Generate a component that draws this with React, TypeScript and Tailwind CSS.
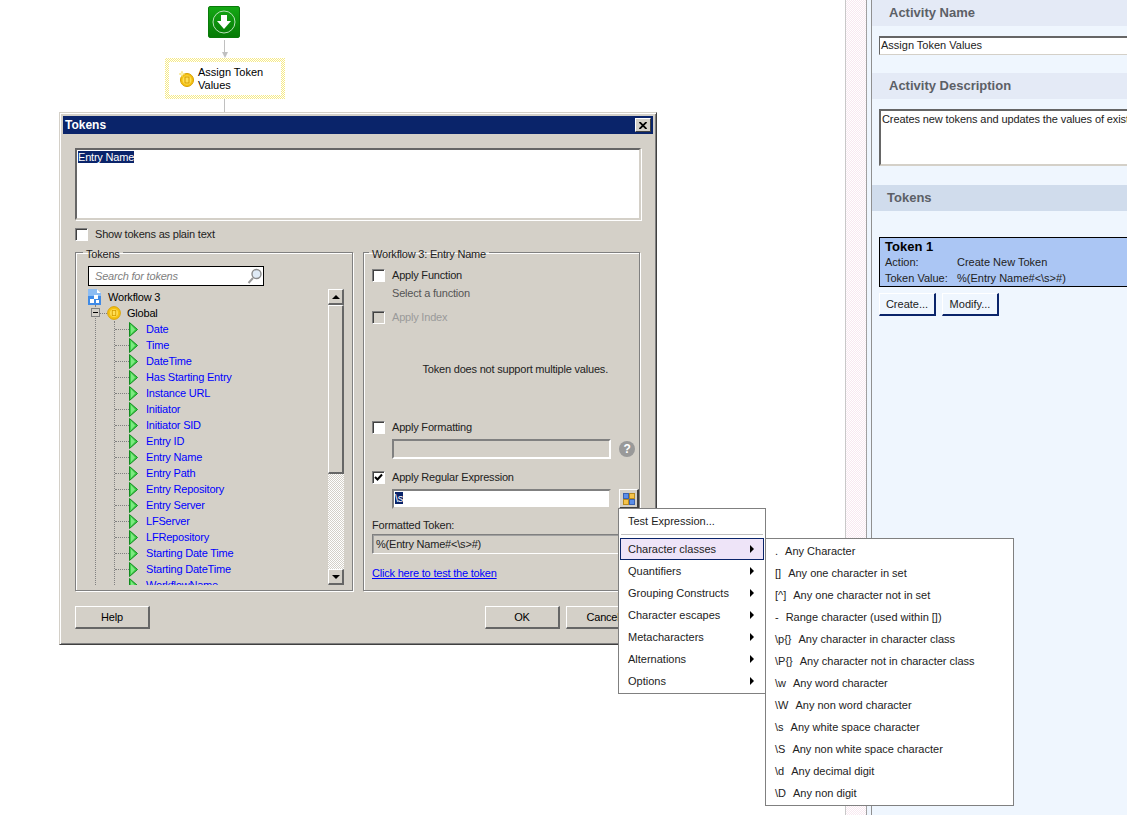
const font = "font-['Liberation_Sans',Arial,sans-serif]";

const tokens = [
  'Date',
  'Time',
  'DateTime',
  'Has Starting Entry',
  'Instance URL',
  'Initiator',
  'Initiator SID',
  'Entry ID',
  'Entry Name',
  'Entry Path',
  'Entry Repository',
  'Entry Server',
  'LFServer',
  'LFRepository',
  'Starting Date Time',
  'Starting DateTime',
  'WorkflowName',
];

const menuItems = [
  'Character classes',
  'Quantifiers',
  'Grouping Constructs',
  'Character escapes',
  'Metacharacters',
  'Alternations',
  'Options',
];

const classItems = [
  ['.', 'Any Character'],
  ['[]', 'Any one character in set'],
  ['[^]', 'Any one character not in set'],
  ['-', 'Range character (used within [])'],
  ['\\p{}', 'Any character in character class'],
  ['\\P{}', 'Any character not in character class'],
  ['\\w', 'Any word character'],
  ['\\W', 'Any non word character'],
  ['\\s', 'Any white space character'],
  ['\\S', 'Any non white space character'],
  ['\\d', 'Any decimal digit'],
  ['\\D', 'Any non digit'],
];

function Coin({ size = 16, sparkle }: { size?: number; sparkle?: boolean }) {
  return (
    <svg width={size} height={size} viewBox="0 0 16 16" className="shrink-0">
      <circle cx="8" cy={sparkle ? 9 : 8} r={sparkle ? 6.5 : 7.3} fill="#f5c211" stroke="#d69e00" />
      <circle cx="8" cy={sparkle ? 9 : 8} r="4.5" fill="#ffdf55" />
      <rect x="6" y={sparkle ? 6 : 5} width="4" height="6" fill="none" stroke="#d69e00" />
      {sparkle && (
        <path d="M3 0 L3.8 2.2 L6 3 L3.8 3.8 L3 6 L2.2 3.8 L0 3 L2.2 2.2 Z" fill="#fff6b0" stroke="#f0d860" strokeWidth="0.5" />
      )}
    </svg>
  );
}

function Arrow() {
  return (
    <svg width="9" height="15" viewBox="0 0 9 15" className="shrink-0">
      <path d="M0.5 0.5 L8.5 7.5 L0.5 14.5 Z" fill="#3fd04a" stroke="#118a1e" />
      <path d="M2 3 L6 7.5 L2 12 Z" fill="#7fe882" />
    </svg>
  );
}

function Checkbox({ checked, disabled }: { checked?: boolean; disabled?: boolean }) {
  return (
    <span
      className={`flex items-center justify-center w-[13px] h-[13px] shrink-0 border-t border-l border-t-[#808080] border-l-[#808080] border-b border-r border-b-white border-r-white shadow-[inset_1px_1px_0_#404040] ${disabled ? 'bg-[#d4d0c8]' : 'bg-white'}`}
    >
      {checked && (
        <svg width="9" height="9" viewBox="0 0 9 9">
          <path d="M1 4 L3.5 6.5 L8 1.5" fill="none" stroke="#000" strokeWidth="2" />
        </svg>
      )}
    </span>
  );
}

function Button({ label, w }: { label: string; w: string }) {
  return (
    <div
      className={`${w} h-[23px] flex items-center justify-center text-black bg-[#d4d0c8] border-t border-l border-t-white border-l-white border-b-2 border-r-2 border-b-[#666666] border-r-[#666666]`}
    >
      {label}
    </div>
  );
}

function TreeRows() {
  return (
    <div className="h-[296px] flex-1 overflow-hidden">
      <div className="flex items-center h-[16px] gap-[7px]">
        <svg width="13" height="16" viewBox="0 0 13 16" className="shrink-0">
          <path d="M0 0 H9 L13 4 V16 H0 Z" fill="#3f8ae6" />
          <path d="M0 0 H9 V4 H13 V7 H0 Z" fill="#8cbcf2" />
          <path d="M9 0 L13 4 H9 Z" fill="#ffffff" />
          <rect x="2" y="10" width="4" height="4" fill="#fff" />
          <rect x="6" y="6" width="4" height="4" fill="#fff" />
          <rect x="8" y="11" width="3" height="3" fill="#fff" />
        </svg>
        <span className="text-black">Workflow 3</span>
      </div>
      <div className="ml-[7px] border-l border-dotted border-[#808080]">
        <div className="flex items-center h-[16px] relative">
          <span className="absolute left-[-5px] top-[3px] w-[9px] h-[9px] bg-[#d4d0c8] border border-[#808080] flex items-center justify-center">
            <span className="w-[5px] h-px bg-black" />
          </span>
          <span className="w-[11px] border-t border-dotted border-[#808080]" />
          <Coin size={14} />
          <span className="ml-[6px] text-black">Global</span>
        </div>
        <div className="ml-[18px] border-l border-dotted border-[#808080]">
          {tokens.map((t) => (
            <div key={t} className="flex items-center h-[16px]">
              <span className="w-[14px] border-t border-dotted border-[#808080]" />
              <Arrow />
              <span className="ml-[8px] text-[#0000ff]">{t}</span>
            </div>
          ))}
        </div>
      </div>
    </div>
  );
}

function Scrollbar() {
  return (
    <div className="w-[16px] h-[296px] flex flex-col shrink-0 bg-[repeating-conic-gradient(#d4d0c8_0_25%,#ffffff_0_50%)] bg-[length:2px_2px]">
      <div className="h-[16px] flex items-center justify-center bg-[#d4d0c8] border-t border-l border-t-white border-l-white border-b-2 border-r-2 border-b-[#666666] border-r-[#666666]">
        <span className="w-0 h-0 border-x-[4px] border-x-transparent border-b-[4px] border-b-black" />
      </div>
      <div className="h-[169px] bg-[#d4d0c8] border-t border-l border-t-white border-l-white border-b-2 border-r-2 border-b-[#666666] border-r-[#666666]" />
      <div className="flex-1" />
      <div className="h-[16px] flex items-center justify-center bg-[#d4d0c8] border-t border-l border-t-white border-l-white border-b-2 border-r-2 border-b-[#666666] border-r-[#666666]">
        <span className="w-0 h-0 border-x-[4px] border-x-transparent border-t-[4px] border-t-black" />
      </div>
    </div>
  );
}

function Dialog() {
  return (
    <div className="absolute left-[59px] top-[112px] w-[598px] h-[533px] bg-[#d4d0c8] border border-t-[#d4d0c8] border-l-[#d4d0c8] border-b-[#404040] border-r-[#404040] shadow-[inset_1px_1px_0_#ffffff,inset_-1px_-1px_0_#808080] p-[3px]">
      <div className="h-[18px] bg-[#0a246a] flex items-center justify-between pl-[2px] pr-[2px]">
        <span className="text-white font-bold text-[12px]">Tokens</span>
        <span className="w-[16px] h-[14px] bg-[#d4d0c8] border-t border-l border-t-white border-l-white border-b border-r border-b-[#404040] border-r-[#404040] flex items-center justify-center">
          <svg width="8" height="7" viewBox="0 0 8 7">
            <path d="M0.5 0 L7.5 7 M7.5 0 L0.5 7" stroke="#000" strokeWidth="1.8" />
          </svg>
        </span>
      </div>

      <div className="pl-[12px] pr-[12px] pt-[14px] tracking-[-0.2px]">
        <div className="h-[72px] bg-white border-2 border-t-[#666666] border-l-[#666666] border-b-[#d4d0c8] border-r-[#d4d0c8] shadow-[1px_1px_0_#ffffff] px-[1px] leading-[14px]">
          <span className="bg-[#0a246a] text-white">Entry Name</span>
        </div>
        <div className="flex items-center gap-[7px] mt-[8px] h-[13px]">
          <Checkbox />
          <span className="leading-[12px] h-[13px]">Show tokens as plain text</span>
        </div>

        <div className="flex gap-[10px] mt-[4px]">
          <fieldset className="w-[278px] h-[346px] border border-[#808080] shadow-[inset_1px_1px_0_#ffffff,1px_1px_0_#ffffff] pl-[12px] pr-[8px]">
            <legend className="relative top-[2px] -ml-[5px] px-[3px] leading-[14px]">Tokens</legend>
            <div className="w-[176px] h-[20px] mt-[7px] bg-white border border-black flex items-center justify-between pl-[6px] pr-[1px]">
              <span className="italic text-[#808080]">Search for tokens</span>
              <svg width="15" height="17" viewBox="0 0 15 17">
                <circle cx="9.5" cy="6" r="4.5" fill="#dfeaf5" stroke="#8a8a8a" strokeWidth="1.4" />
                <path d="M6 10 L1.5 15" stroke="#999999" strokeWidth="2" />
              </svg>
            </div>
            <div className="flex mt-[3px]">
              <TreeRows />
              <Scrollbar />
            </div>
          </fieldset>

          <fieldset className="w-[277px] h-[346px] border border-[#808080] shadow-[inset_1px_1px_0_#ffffff,1px_1px_0_#ffffff] pl-[8px] pr-[0px]">
            <legend className="relative top-[2px] -ml-[3px] px-[3px] leading-[14px]">Workflow 3: Entry Name</legend>
            <div className="flex items-center gap-[7px] mt-[9px] h-[14px]">
              <Checkbox />
              <span>Apply Function</span>
            </div>
            <div className="ml-[20px] mt-[4px] h-[14px] leading-[14px] text-[#555555]">Select a function</div>
            <div className="flex items-center gap-[7px] mt-[10px] h-[14px] text-[#9a9a9a]">
              <Checkbox disabled />
              <span>Apply Index</span>
            </div>
            <div className="h-[96px] flex items-center justify-end pr-[31px] pb-[6px]">Token does not support multiple values.</div>
            <div className="flex items-center gap-[7px] h-[14px]">
              <Checkbox />
              <span>Apply Formatting</span>
            </div>
            <div className="flex items-center gap-[8px] mt-[5px] ml-[20px]">
              <div className="w-[219px] h-[20px] border-2 border-t-[#808080] border-l-[#808080] border-b-white border-r-white" />
              <span className="w-[16px] h-[16px] rounded-full bg-[#999999] text-white font-bold text-[12px] flex items-center justify-center">?</span>
            </div>
            <div className="flex items-center gap-[7px] mt-[11px] h-[14px]">
              <Checkbox checked />
              <span>Apply Regular Expression</span>
            </div>
            <div className="flex items-center gap-[8px] mt-[5px] ml-[20px]">
              <div className="w-[219px] h-[20px] bg-white border-2 border-t-[#808080] border-l-[#808080] border-b-[#d4d0c8] border-r-[#d4d0c8] px-[1px] leading-[15px]">
                <span className="bg-[#0a246a] text-white">\s</span>
              </div>
              <div className="w-[20px] h-[20px] border-t border-l border-t-white border-l-white border-b-2 border-r-2 border-b-[#404040] border-r-[#404040] flex items-center justify-center">
                <svg width="12" height="12" viewBox="0 0 12 12">
                  <rect x="0.5" y="0.5" width="5" height="5" fill="#5b8ee8" stroke="#3a62b0" />
                  <rect x="6.5" y="0.5" width="5" height="5" fill="#f5c34a" stroke="#b98a1c" />
                  <rect x="0.5" y="6.5" width="5" height="5" fill="#f5c34a" stroke="#b98a1c" />
                  <rect x="6.5" y="6.5" width="5" height="5" fill="#5b8ee8" stroke="#3a62b0" />
                </svg>
              </div>
            </div>
            <div className="mt-[9px] h-[14px] leading-[14px]">Formatted Token:</div>
            <div className="w-[259px] h-[20px] mt-[2px] border border-t-[#808080] border-l-[#808080] border-b-white border-r-white shadow-[inset_1px_1px_0_#a0a0a0] px-[3px] leading-[18px]">%(Entry Name#&lt;\s&gt;#)</div>
            <div className="mt-[12px] leading-[14px] text-[#0000ff] underline">Click here to test the token</div>
          </fieldset>
        </div>

        <div className="flex mt-[15px]">
          <Button label="Help" w="w-[75px]" />
          <div className="ml-[335px]">
            <Button label="OK" w="w-[75px]" />
          </div>
          <div className="ml-[6px]">
            <Button label="Cancel" w="w-[75px]" />
          </div>
        </div>
      </div>
    </div>
  );
}

function Menus() {
  return (
    <>
      <div className="absolute left-[618px] top-[508px] w-[148px] h-[186px] bg-white border border-[#808080] px-[1px] pt-[1px]">
        <div className="h-[22px] mb-[2px] flex items-center pl-[8px]">Test Expression...</div>
        <div className="h-px mx-[1px] mt-[1px] bg-[#c0c0c0]" />
        <div className="mt-[2px] pt-px">
          {menuItems.map((m, i) => (
            <div
              key={m}
              className={`h-[22px] flex items-center justify-between pl-[7px] pr-[9px] border ${i === 0 ? 'bg-[#eee4f8] border-[#0a246a]' : 'border-transparent'}`}
            >
              <span>{m}</span>
              <span className="w-0 h-0 border-y-[4px] border-y-transparent border-l-[4px] border-l-black" />
            </div>
          ))}
        </div>
      </div>
      <div className="absolute left-[765px] top-[538px] w-[249px] h-[268px] bg-white border border-[#808080] pl-[9px] pt-[1px]">
        {classItems.map(([prefix, text]) => (
          <div key={text} className="h-[22px] flex items-center whitespace-pre">
            <span>{prefix}</span>
            <span className="ml-[7px]">{text}</span>
          </div>
        ))}
      </div>
    </>
  );
}

function Flow() {
  return (
    <div className="flex flex-col items-center w-[120px] ml-[165px] pt-[6px]">
      <div className="w-[32px] h-[32px] mr-[2px] rounded-[2px] bg-gradient-to-b from-[#14a814] to-[#067a06] border border-[#0a7a0a] flex items-center justify-center">
        <svg width="24" height="24" viewBox="0 0 24 24">
          <circle cx="12" cy="12" r="11" fill="none" stroke="#b8e0b8" strokeWidth="1" />
          <path d="M9 5 H15 V11 H19 L12 19 L5 11 H9 Z" fill="#fff" />
        </svg>
      </div>
      <div className="w-px h-[12px] mt-[2px] mr-[1px] bg-[#c0c0c0]" />
      <span className="w-0 h-0 mr-[1px] border-x-[3px] border-x-transparent border-t-[6px] border-t-[#c0c0c0]" />
      <div className="w-[120px] h-[41px] p-[4px] bg-[repeating-conic-gradient(#f6ea85_0_25%,#ffffff_0_50%)] bg-[length:2px_2px]">
        <div className="h-full bg-white flex items-center pl-[10px] gap-[3px]">
          <Coin size={16} sparkle />
          <span className="leading-[13px] text-black pt-[1px] w-[70px]">Assign Token Values</span>
        </div>
      </div>
      <div className="w-px h-[13px] mr-[1px] bg-[#c0c0c0]" />
    </div>
  );
}

function Band({ label, dark }: { label: string; dark?: boolean }) {
  return (
    <div className={`h-[26px] flex items-center font-bold text-[13px] text-[#5c6066] ${dark ? 'bg-[#d0dcec] pl-[15px]' : 'bg-[#e4eaf6] pl-[17px]'}`}>
      {label}
    </div>
  );
}

function RightPanel() {
  return (
    <div className="w-[255px] h-full bg-[#eff6fe] overflow-hidden shrink-0">
      <Band label="Activity Name" />
      <div className="ml-[7px] mt-[10px] w-[300px] h-[19px] bg-white border-2 border-t-[#666666] border-l-[#666666] border-b-[#d4d0c8] border-r-[#d4d0c8] border-b-[1px] border-l-[1px] leading-[15px] px-[1px]">
        Assign Token Values
      </div>
      <div className="mt-[18px]">
        <Band label="Activity Description" />
      </div>
      <div className="ml-[7px] mt-[10px] w-[400px] h-[57px] bg-white border-2 border-t-[#666666] border-l-[#666666] border-b-[#d4d0c8] border-r-[#d4d0c8] leading-[17px] px-[1px] whitespace-nowrap tracking-[-0.1px]">
        Creates new tokens and updates the values of existing tokens.
      </div>
      <div className="mt-[19px]">
        <Band label="Tokens" dark />
      </div>
      <div className="ml-[7px] mt-[26px] w-[300px] h-[50px] bg-[#abc6f4] border border-black pl-[5px] pt-[2px] leading-[16px]">
        <div className="font-bold text-[13px] text-black h-[14px] leading-[14px]">Token 1</div>
        <div className="flex">
          <span className="w-[72px]">Action:</span>
          <span>Create New Token</span>
        </div>
        <div className="flex">
          <span className="w-[72px]">Token Value:</span>
          <span>%(Entry Name#&lt;\s&gt;#)</span>
        </div>
      </div>
      <div className="flex gap-[6px] ml-[7px] mt-[6px]">
        <div className="w-[57px] h-[23px] flex items-center justify-center bg-[#eff6fe] border-t border-l border-t-white border-l-white border-b-2 border-r-2 border-b-[#0a246a] border-r-[#0a246a]">Create...</div>
        <div className="w-[57px] h-[23px] flex items-center justify-center bg-[#eff6fe] border-t border-l border-t-white border-l-white border-b-2 border-r-2 border-b-[#0a246a] border-r-[#0a246a]">Modify...</div>
      </div>
    </div>
  );
}

export default function App() {
  return (
    <div className={`relative w-[1127px] h-[815px] overflow-hidden bg-white text-[11px] leading-[16px] text-[#222222] ${font}`}>
      <div className="flex h-full">
        <div className="w-[845px] shrink-0">
          <Flow />
        </div>
        <div className="w-[22px] shrink-0 border-x border-l-[#c8c8c8] border-r-[#a0a0a0] bg-[repeating-conic-gradient(#f8e8f0_0_25%,#ffffff_0_50%)] bg-[length:2px_2px]" />
        <div className="w-[4px] shrink-0 bg-[#eff6fe]" />
        <div className="w-px shrink-0 bg-[#909090]" />
        <RightPanel />
      </div>
      <Dialog />
      <Menus />
    </div>
  );
}
